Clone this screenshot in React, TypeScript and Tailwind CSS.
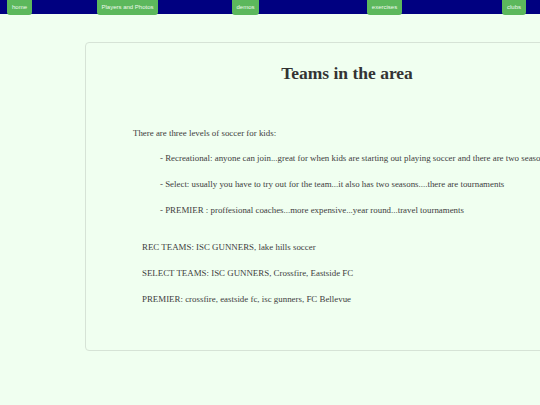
import React from 'react';

const navItems = [
  { label: 'home', cls: 'ml-[7px] w-[25px]' },
  { label: 'Players and Photos', cls: 'ml-[65px] w-[61px]' },
  { label: 'demos', cls: 'ml-[74px] w-[27px]' },
  { label: 'exercises', cls: 'ml-[108px] w-[35px]' },
  { label: 'clubs', cls: 'ml-[100px] w-[24px]' },
];

const levels = [
  '- Recreational: anyone can join...great for when kids are starting out playing soccer and there are two seasons',
  '- Select: usually you have to try out for the team...it also has two seasons....there are tournaments',
  '- PREMIER : proffesional coaches...more expensive...year round...travel tournaments',
];

const teams = [
  'REC TEAMS: ISC GUNNERS, lake hills soccer',
  'SELECT TEAMS: ISC GUNNERS, Crossfire, Eastside FC',
  'PREMIER: crossfire, eastside fc, isc gunners, FC Bellevue',
];

const App: React.FC = () => {
  return (
    <div className="min-h-screen w-full overflow-hidden bg-[#f0fff0] pb-[55px]">
      {/* Top nav */}
      <nav className="flex h-[14px] bg-[#000080] font-['Liberation_Sans',Arial,sans-serif]">
        {navItems.map((item) => (
          <a
            key={item.label}
            className={`${item.cls} flex h-[15px] shrink-0 items-center justify-center whitespace-nowrap rounded-b-[3px] bg-[#5cb85c] text-[6px] text-[#eef8ee]`}
          >
            {item.label}
          </a>
        ))}
      </nav>

      {/* Content card */}
      <section className="ml-[85px] mt-[28px] w-[524px] shrink-0 rounded-[4px] border border-[#d6e3d6] pb-[38px] pt-[20px] font-['Liberation_Serif','Times_New_Roman',serif] text-[#404040]">
        <h1 className="text-center text-[17.5px] font-bold leading-[20px] text-[#333]">
          Teams in the area
        </h1>

        <p className="mt-[38px] pl-[47px] text-[8.9px] leading-[24px]">
          There are three levels of soccer for kids:
        </p>

        <div className="pl-[74px] text-[8.9px] leading-[26px]">
          {levels.map((line) => (
            <p key={line} className="whitespace-nowrap">
              {line}
            </p>
          ))}
        </div>

        <div className="mt-[11px] pl-[56px] text-[8.9px] leading-[26px]">
          {teams.map((line) => (
            <p key={line} className="whitespace-nowrap">
              {line}
            </p>
          ))}
        </div>
      </section>
    </div>
  );
};

export default App;
